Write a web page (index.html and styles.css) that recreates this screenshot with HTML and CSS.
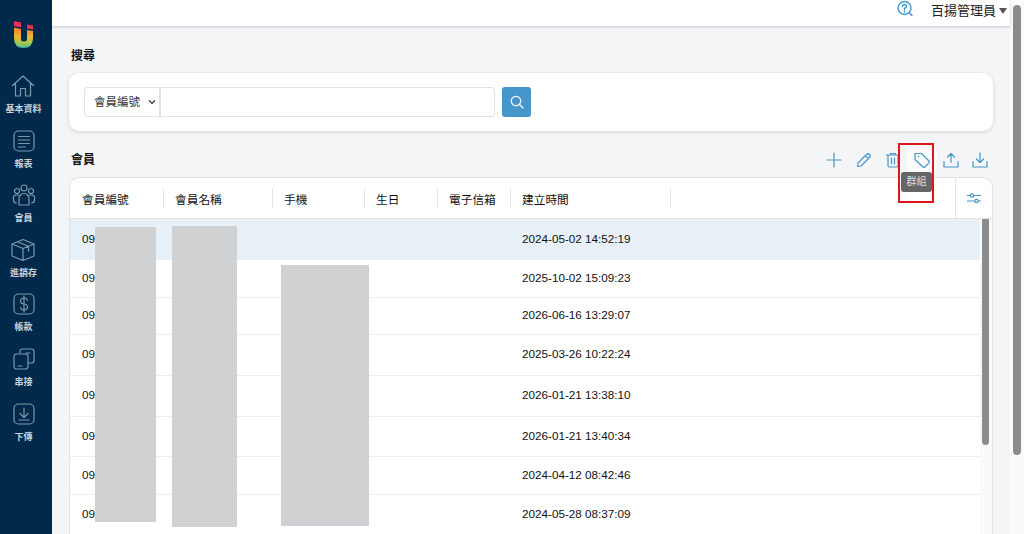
FILE: index.html
```html
<!DOCTYPE html>
<html lang="zh-Hant">
<head>
    <meta charset="UTF-8">
    <title>會員</title>
    <link rel="stylesheet" href="styles.css">
</head>
<body>
    <div class="app">
        <nav class="sidebar">
            <svg class="logo" width="24" height="30" viewBox="0 0 24 30">
                <defs>
                    <linearGradient id="logo-grad" x1="0" y1="0" x2="0" y2="1">
                        <stop offset="0" stop-color="#f5812a"/>
                        <stop offset="0.45" stop-color="#f2b233"/>
                        <stop offset="0.75" stop-color="#a5c94f"/>
                        <stop offset="1" stop-color="#3fb9a0"/>
                    </linearGradient>
                </defs>
                <path d="M2 1 L9 2.5 V7.5 L2 6 Z" fill="#e8305a"/>
                <path d="M15 4.5 L21 5.5 V9.5 L15 8.5 Z" fill="#e8305a"/>
                <path d="M2 7.5 L9 9 V19 Q9 21.500 11.500 21.500 Q15 21.500 15 19 V10 L21 11 V18 Q21 28 11.500 28 Q2 28 2 18 Z" fill="url(#logo-grad)"/>
            </svg>
            <a class="nav-item">
                <svg viewBox="0 0 24 24"><path d="M1.500 11.500 12 2l10.500 9.500M4.500 9.500V22h5v-7.500h5V22h5V9.500"/></svg>
                <span>基本資料</span>
            </a>
            <a class="nav-item">
                <svg viewBox="0 0 24 24"><rect x="2" y="2" width="20" height="20" rx="4.500"/><path d="M6.500 7.500h11M6.500 11h11M6.500 14.500h11M6.500 18h7"/></svg>
                <span>報表</span>
            </a>
            <a class="nav-item">
                <svg viewBox="0 0 24 24"><circle cx="12" cy="5" r="3"/><circle cx="5" cy="8" r="2.500"/><circle cx="19" cy="8" r="2.500"/><path d="M7 22v-6.500a5 5 0 0 1 10 0V22ZM4.500 20Q1.500 20 1.500 17v-2.500Q1.500 12 4 12h2.500M19.500 20q3 0 3-3v-2.500Q22.500 12 20 12h-2.500"/></svg>
                <span>會員</span>
            </a>
            <a class="nav-item">
                <svg viewBox="0 0 24 24"><path d="M12 1.500 23 6v12l-11 4.500L1 18V6ZM1 6l11 4.500L23 6M12 10.500v12M6.500 3.700l11 4.500v5"/></svg>
                <span>進銷存</span>
            </a>
            <a class="nav-item">
                <svg viewBox="0 0 24 24"><rect x="2" y="2" width="20" height="20" rx="4.500"/><path d="M15.500 8.500Q15 6 12 6 8.500 6 8.500 9t3.500 3 3.500 3-3.500 3q-3 0-3.500-2.500M12 4v16"/></svg>
                <span>帳款</span>
            </a>
            <a class="nav-item">
                <svg viewBox="0 0 24 24"><path d="M8 6V4.500Q8 2 10.500 2h9Q22 2 22 4.500v9q0 2.500-2.500 2.500H16M14 6h4"/><rect x="2" y="7" width="14" height="15" rx="2.500"/><path d="M6 19h4"/></svg>
                <span>串接</span>
            </a>
            <a class="nav-item">
                <svg viewBox="0 0 24 24"><rect x="2" y="2" width="20" height="20" rx="4.500"/><path d="M12 6v9M8 11.500l4 4 4-4M7 18h10"/></svg>
                <span>下傳</span>
            </a>
        </nav>

        <div class="main">
            <header class="topbar">
                <svg class="help-icon" width="18" height="18" viewBox="0 0 18 18">
                    <circle cx="8.500" cy="8" r="6.500"/>
                    <path d="M13.200 12.700 16 15.500"/>
                    <path d="M6.500 6.500Q6.500 4.500 8.500 4.500t2 1.800Q10.500 7.500 8.500 8.500v1M8.500 11v1"/>
                </svg>
                <span class="user-name">百揚管理員</span>
                <span class="caret"></span>
            </header>

            <div class="content">
                <h2 class="section-title search-title">搜尋</h2>
                <div class="search-card">
                    <div class="select-wrap">
                        <select class="search-select">
                            <option>會員編號</option>
                        </select>
                        <svg class="select-chevron" width="8" height="6" viewBox="0 0 8 6"><path d="M1 1.500 4 4.500 7 1.500"/></svg>
                    </div>
                    <input class="search-input" type="text">
                    <button class="search-btn">
                        <svg width="14" height="14" viewBox="0 0 14 14"><circle cx="6" cy="6" r="4.700"/><path d="M9.500 9.500 13 13"/></svg>
                    </button>
                </div>

                <div class="section-head">
                    <h2 class="section-title members-title">會員</h2>
                    <div class="toolbar">
                        <button class="tool-btn"><svg viewBox="0 0 18 18"><path d="M9 2v14M2 9h14"/></svg></button>
                        <button class="tool-btn"><svg viewBox="0 0 18 18"><path d="M3 12 11.500 3.500a2.100 2.100 0 0 1 3 3L6 15l-3.500.5ZM10.500 4.500l3 3"/></svg></button>
                        <button class="tool-btn"><svg viewBox="0 0 18 18"><path d="M2.500 4h13M6.500 4V2.500h5V4M4 4v10.500Q4 16 5.500 16h7q1.500 0 1.500-1.500V4M7.500 7v6M10.500 7v6"/></svg></button>
                        <button class="tool-btn tool-active"><svg viewBox="0 0 18 18"><path d="M2 2.500h6.500L16 10q.8.900 0 1.800L11.800 16q-.9.800-1.800 0L2 8.500ZM5.300 5.300h.5"/></svg></button>
                        <button class="tool-btn"><svg viewBox="0 0 18 18"><path d="M9 11.500V2.500M5.500 6 9 2.500 12.500 6M2 10.500V16h14v-5.500"/></svg></button>
                        <button class="tool-btn"><svg viewBox="0 0 18 18"><path d="M9 2v9.500M5.500 8 9 11.500 12.500 8M2 10.500V16h14v-5.500"/></svg></button>
                    </div>
                    <div class="tooltip">群組</div>
                    <div class="highlight"></div>
                </div>

                <div class="table-card">
                    <div class="table-head">
                        <div class="th">會員編號</div>
                        <div class="th">會員名稱</div>
                        <div class="th">手機</div>
                        <div class="th">生日</div>
                        <div class="th">電子信箱</div>
                        <div class="th">建立時間</div>
                        <div class="th"></div>
                        <div class="th-settings">
                            <svg width="16" height="16" viewBox="0 0 16 16"><path d="M1 5.500h14M1 11h14"/><circle cx="6" cy="5.500" r="1.700"/><circle cx="10.500" cy="11" r="1.700"/></svg>
                        </div>
                    </div>
                    <div class="table-body">
                        <div class="rows">
                            <div class="row row-41 selected"><div>09</div><div></div><div></div><div></div><div></div><div>2024-05-02 14:52:19</div></div>
                            <div class="row row-38"><div>09</div><div></div><div></div><div></div><div></div><div>2025-10-02 15:09:23</div></div>
                            <div class="row row-37"><div>09</div><div></div><div></div><div></div><div></div><div>2026-06-16 13:29:07</div></div>
                            <div class="row row-41"><div>09</div><div></div><div></div><div></div><div></div><div>2025-03-26 10:22:24</div></div>
                            <div class="row row-41"><div>09</div><div></div><div></div><div></div><div></div><div>2026-01-21 13:38:10</div></div>
                            <div class="row row-40"><div>09</div><div></div><div></div><div></div><div></div><div>2026-01-21 13:40:34</div></div>
                            <div class="row row-38"><div>09</div><div></div><div></div><div></div><div></div><div>2024-04-12 08:42:46</div></div>
                            <div class="row row-40"><div>09</div><div></div><div></div><div></div><div></div><div>2024-05-28 08:37:09</div></div>
                        </div>
                        <div class="scroll-track"><div class="scroll-thumb"></div></div>
                        <div class="redact redact-id"></div>
                        <div class="redact redact-name"></div>
                        <div class="redact redact-phone"></div>
                    </div>
                </div>
            </div>
        </div>

        <div class="page-scroll"><div class="page-thumb"></div></div>
    </div>
</body>
</html>
```

FILE: styles.css
```css
html, body {
    margin: 0;
    height: 100%;
    overflow: hidden;
}

body {
    background-color: #f4f5f7;
    color: #222;
    font-family: "Liberation Sans", "Noto Sans CJK TC", sans-serif;
}

.app {
    display: flex;
    height: 534px;
    overflow: hidden;
}

/* sidebar */
.sidebar {
    width: 47px;
    padding-right: 5px;
    flex-shrink: 0;
    background-color: #012a4a;
    display: flex;
    flex-direction: column;
    align-items: center;
}

.logo {
    margin-top: 20px;
    margin-bottom: 24px;
}

.nav-item {
    height: 54.6px;
    display: flex;
    flex-direction: column;
    align-items: center;
    color: #c9d3dc;
    font-size: 9px;
    font-weight: bold;
    line-height: 12px;
}

.nav-item svg {
    width: 24px;
    height: 24px;
    fill: none;
    stroke: #7f98ad;
    stroke-width: 1.200;
    stroke-linejoin: round;
    stroke-linecap: round;
    margin-bottom: 5px;
    flex-shrink: 0;
}

/* main area */
.main {
    flex: 1;
    min-width: 0;
    display: flex;
    flex-direction: column;
}

.topbar {
    height: 26px;
    flex-shrink: 0;
    background-color: #fff;
    box-shadow: 0 1px 3px rgba(0, 0, 0, 0.18);
    display: flex;
    align-items: flex-start;
    justify-content: flex-end;
    position: relative;
}

.help-icon {
    fill: none;
    stroke: #4596cb;
    stroke-width: 1.400;
    stroke-linecap: round;
    margin-right: 17px;
}

.user-name {
    font-size: 13px;
    line-height: 21px;
    color: #222;
}

.caret {
    width: 0;
    height: 0;
    border-left: 4px solid transparent;
    border-right: 4px solid transparent;
    border-top: 6px solid #555;
    margin: 8px 3px 0 3px;
}

.content {
    padding: 0 17px;
}

.section-title {
    margin: 0;
    font-size: 12px;
    font-weight: bold;
    line-height: 16px;
    color: #111;
}

.search-title {
    margin: 22px 0 9px 2px;
}

.members-title {
    margin-top: 1px;
}

.search-card {
    background-color: #fff;
    border-radius: 10px;
    box-shadow: 0 1px 4px rgba(0, 0, 0, 0.14);
    height: 58px;
    padding: 14px 15px;
    box-sizing: border-box;
    display: flex;
    align-items: flex-start;
}

.select-wrap {
    position: relative;
    height: 30px;
}

.search-select {
    appearance: none;
    display: block;
    width: 75px;
    height: 30px;
    padding: 0 0 0 9px;
    background-color: #fff;
    border: 1px solid #e2e2e2;
    border-right: none;
    border-radius: 4px 0 0 4px;
    font-family: inherit;
    font-size: 11.500px;
    color: #333;
}

.select-chevron {
    position: absolute;
    left: 64px;
    top: 12px;
    fill: none;
    stroke: #333;
    stroke-width: 1.200;
}

.search-input {
    width: 336px;
    height: 30px;
    box-sizing: border-box;
    border: 1px solid #e2e2e2;
    border-left-width: 2px;
    border-radius: 0 4px 4px 0;
    outline: none;
}

.search-btn {
    width: 29px;
    height: 30px;
    margin-left: 7px;
    padding: 0;
    background-color: #4596cb;
    border: none;
    border-radius: 3px;
    display: flex;
    align-items: center;
    justify-content: center;
}

.search-btn svg {
    fill: none;
    stroke: #fff;
    stroke-width: 1.200;
    stroke-linecap: round;
}

.section-head {
    position: relative;
    display: flex;
    align-items: center;
    justify-content: space-between;
    height: 46px;
    box-sizing: border-box;
    padding: 11px 0 0 2px;
}

.toolbar {
    display: flex;
    margin-right: -2px;
}

.tool-btn {
    width: 29.200px;
    height: 24px;
    padding: 0;
    background: none;
    border: none;
    display: flex;
    align-items: center;
    justify-content: center;
}

.tool-btn svg {
    width: 18px;
    height: 18px;
    fill: none;
    stroke: #4596cb;
    stroke-width: 1.200;
    stroke-linejoin: round;
    stroke-linecap: round;
}

.tool-active {
    background-color: #fbfbfc;
}

.tooltip {
    position: absolute;
    left: 832px;
    top: 41px;
    width: 31px;
    height: 20px;
    background-color: #666;
    border-radius: 3px;
    color: #ddd;
    font-size: 10px;
    line-height: 20px;
    text-align: center;
    z-index: 2;
}

.highlight {
    position: absolute;
    left: 829px;
    top: 12px;
    width: 32px;
    height: 56px;
    border: 2px solid #e0151c;
    z-index: 3;
}

/* table */
.table-card {
    background-color: #fff;
    border: 1px solid #e3e3e3;
    border-bottom: none;
    border-radius: 10px 10px 0 0;
    height: 356px;
    overflow: hidden;
}

.table-head {
    display: grid;
    grid-template-columns: 93px 109px 92px 73px 73px 160px 1fr 37px;
    height: 40px;
    border-bottom: 1px solid #e3e3e3;
    align-items: center;
    font-size: 11.700px;
}

.th {
    height: 20px;
    line-height: 23px;
    padding-left: 12px;
    box-sizing: border-box;
    color: #111;
}

.th + .th {
    padding-left: 11px;
    border-left: 1px solid #e6e6e6;
}

.th-settings {
    height: 40px;
    border-left: 1px solid #e3e3e3;
    display: flex;
    align-items: center;
    justify-content: center;
}

.th-settings svg {
    fill: #fff;
    stroke: #4596cb;
    stroke-width: 1.200;
}

.table-body {
    position: relative;
    display: flex;
}

.rows {
    flex: 1;
    min-width: 0;
}

.row {
    display: grid;
    grid-template-columns: 93px 109px 92px 73px 73px 1fr;
    align-items: center;
    box-sizing: border-box;
    border-bottom: 1px solid #eee;
    font-size: 11.700px;
    color: #111;
}

.row > div {
    padding: 0 0 3px 12px;
}

.row-37 { height: 37px; }
.row-38 { height: 38px; }
.row-40 { height: 40px; }
.row-41 { height: 41px; }

.selected {
    background-color: #e8f0f7;
    border-bottom: none;
}

.scroll-track {
    width: 12px;
    background-color: #fafafa;
    flex-shrink: 0;
    height: 320px;
}

.scroll-thumb {
    width: 7px;
    height: 226px;
    margin-left: 2px;
    background-color: #8c8c8c;
    border-radius: 0 0 4px 4px;
}

.redact {
    position: absolute;
    background-color: #d0d1d3;
}

.redact-id {
    left: 25px;
    top: 8px;
    width: 61px;
    height: 295px;
}

.redact-name {
    left: 102px;
    top: 7px;
    width: 65px;
    height: 301px;
}

.redact-phone {
    left: 211px;
    top: 46px;
    width: 88px;
    height: 261px;
}

/* page scrollbar */
.page-scroll {
    width: 14px;
    flex-shrink: 0;
    background-color: #fafafa;
}

.page-thumb {
    width: 8px;
    height: 450px;
    margin: 5px 0 0 3px;
    background-color: #8c8c8c;
    border-radius: 4px;
}
```
